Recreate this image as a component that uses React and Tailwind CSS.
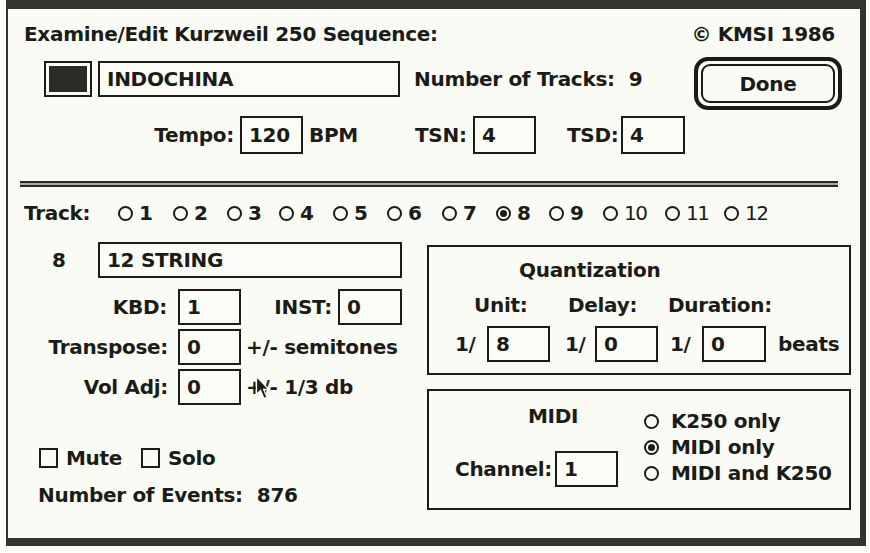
import React from "react";

// Kurzweil 250 sequence editor dialog, classic Mac look

function Field({ className = "", children }) {
  return (
    <div className={`flex shrink-0 items-center border-2 border-[#1c1c16] bg-[#fcfcf7] pl-[7px] ${className}`}>
      {children}
    </div>
  );
}

function Radio({ on = false }) {
  return (
    <span className="flex h-[15px] w-[15px] shrink-0 items-center justify-center rounded-full border-2 border-[#1c1c16]">
      {on && <span className="h-[7px] w-[7px] rounded-full bg-[#1c1c16]" />}
    </span>
  );
}

function Check({ label, className = "" }) {
  return (
    <div className={`flex items-center ${className}`}>
      <span className="h-[20px] w-[19px] shrink-0 border-2 border-[#1c1c16]" />
      <span className="ml-[8px]">{label}</span>
    </div>
  );
}

const TRACKS = [
  { n: "1", w: "w-[55px]" },
  { n: "2", w: "w-[54px]" },
  { n: "3", w: "w-[52px]" },
  { n: "4", w: "w-[54px]" },
  { n: "5", w: "w-[54px]" },
  { n: "6", w: "w-[55px]" },
  { n: "7", w: "w-[54px]" },
  { n: "8", w: "w-[53px]", on: true },
  { n: "9", w: "w-[54px]" },
  { n: "10", w: "w-[62px]", thin: true },
  { n: "11", w: "w-[59px]", thin: true },
  { n: "12", w: "w-[50px]", thin: true },
];

function Cursor() {
  return (
    <svg className="absolute left-[9px] top-[-1px]" width="17" height="25" viewBox="0 0 17 25">
      <path
        d="M1.5 1.5 L1.5 19.5 L5.5 15.5 L9 23.5 L12 22.2 L8.6 14.5 L14 14.5 Z"
        fill="#1c1c16"
        stroke="#fbfbf6"
        strokeWidth="1.3"
      />
    </svg>
  );
}

export default function App() {
  return (
    <div className="h-[553px] w-[870px] bg-[#fdfdfa] font-['DejaVu_Sans','Liberation_Sans',sans-serif] text-[20px] font-bold leading-[22px] tracking-[-0.3px] text-[#1c1c16]">
      <div className="ml-[6px] h-[546px] w-[860px] border-b-[8px] border-l-2 border-r-[6px] border-t-[9px] border-[#34342f] bg-[#fbfbf6]">
        {/* title line */}
        <div className="mt-[15px] flex h-[20px] items-center justify-between pl-[16px] pr-[25px]">
          <span>Examine/Edit Kurzweil 250 Sequence:</span>
          <span>© KMSI 1986</span>
        </div>

        {/* name row */}
        <div className="mt-[13px] flex h-[53px] items-start">
          <div className="ml-[36px] mt-[4px] h-[36px] w-[48px] shrink-0 border-2 border-[#1c1c16] p-[3px]">
            <div className="h-full w-full bg-[#2a2a26]" />
          </div>
          <Field className="ml-[6px] mt-[4px] h-[36px] w-[302px]">INDOCHINA</Field>
          <div className="ml-[14px] mt-[4px] flex h-[36px] items-center">
            <span>Number of Tracks:</span>
            <span className="ml-[14px]">9</span>
          </div>
          <div className="ml-auto mr-[18px] h-[53px] w-[148px] shrink-0 rounded-[14px] border-[4px] border-[#1c1c16] p-[3px]">
            <div className="flex h-full w-full items-center justify-center rounded-[9px] border-2 border-[#1c1c16]">
              Done
            </div>
          </div>
        </div>

        {/* tempo / time signature */}
        <div className="mt-[6px] flex h-[38px] items-center">
          <span className="w-[226px] text-right">Tempo:</span>
          <Field className="ml-[6px] h-[38px] w-[63px]">120</Field>
          <span className="w-[112px] pl-[6px]">BPM</span>
          <span className="w-[53px]">TSN:</span>
          <Field className="ml-[5px] h-[38px] w-[63px]">4</Field>
          <span className="ml-[31px] w-[49px] whitespace-nowrap text-right">TSD:</span>
          <Field className="ml-[5px] h-[38px] w-[64px]">4</Field>
        </div>

        <div className="ml-[12px] mt-[27px] h-[6px] w-[818px] border-y-2 border-[#2a2a25] bg-[#a9a9a2]" />

        {/* track selector */}
        <div className="mt-[17px] flex h-[18px] items-center">
          <span className="w-[110px] shrink-0 pl-[16px]">Track:</span>
          {TRACKS.map((t) => (
            <div key={t.n} className={`flex shrink-0 items-center ${t.w}`}>
              <Radio on={t.on} />
              <span className={t.thin ? "ml-[6px] font-normal tracking-[-1.5px]" : "ml-[6px]"}>{t.n}</span>
            </div>
          ))}
        </div>

        <div className="mt-[20px] flex">
          {/* track details */}
          <div className="w-[419px] shrink-0">
            <div className="flex h-[36px] items-center">
              <span className="w-[90px] pl-[44px]">8</span>
              <Field className="h-[36px] w-[304px]">12 STRING</Field>
            </div>
            <div className="mt-[11px] flex h-[36px] items-center">
              <span className="w-[159px] text-right">KBD:</span>
              <Field className="ml-[11px] h-[36px] w-[63px]">1</Field>
              <span className="w-[91px] text-right">INST:</span>
              <Field className="ml-[6px] h-[36px] w-[64px]">0</Field>
            </div>
            <div className="mt-[4px] flex h-[36px] items-center">
              <span className="w-[160px] text-right">Transpose:</span>
              <Field className="ml-[10px] h-[36px] w-[63px]">0</Field>
              <span className="ml-[5px] whitespace-nowrap">+/- semitones</span>
            </div>
            <div className="mt-[4px] flex h-[36px] items-center">
              <span className="w-[160px] text-right">Vol Adj:</span>
              <Field className="ml-[10px] h-[36px] w-[63px]">0</Field>
              <span className="relative ml-[5px] whitespace-nowrap">
                +/- 1/3 db
                <Cursor />
              </span>
            </div>
            <div className="mt-[43px] flex h-[20px] items-center pl-[31px]">
              <Check label="Mute" className="w-[102px]" />
              <Check label="Solo" />
            </div>
            <div className="mt-[17px] flex h-[20px] items-center pl-[30px]">
              <span>Number of Events:</span>
              <span className="ml-[14px]">876</span>
            </div>
          </div>

          {/* quantization + midi */}
          <div className="mt-[3px] w-[424px] shrink-0">
            <div className="h-[130px] border-2 border-[#1c1c16]">
              <div className="mt-[13px] flex h-[20px] items-center pl-[90px]">Quantization</div>
              <div className="mt-[15px] flex h-[20px] items-center pl-[45px]">
                <span className="w-[94px]">Unit:</span>
                <span className="w-[100px]">Delay:</span>
                <span>Duration:</span>
              </div>
              <div className="mt-[11px] flex h-[36px] items-center pl-[26px]">
                <span className="w-[32px]">1/</span>
                <Field className="h-[36px] w-[63px]">8</Field>
                <span className="ml-[15px] w-[30px]">1/</span>
                <Field className="h-[36px] w-[63px]">0</Field>
                <span className="ml-[12px] w-[32px]">1/</span>
                <Field className="h-[36px] w-[64px]">0</Field>
                <span className="ml-[12px]">beats</span>
              </div>
            </div>

            <div className="mt-[14px] flex h-[121px] border-2 border-[#1c1c16]">
              <div className="w-[215px] shrink-0">
                <div className="mt-[15px] flex h-[20px] items-center pl-[99px]">MIDI</div>
                <div className="mt-[25px] flex h-[36px] items-center pl-[26px]">
                  <span className="w-[100px]">Channel:</span>
                  <Field className="h-[36px] w-[63px]">1</Field>
                </div>
              </div>
              <div className="mt-[17px]">
                <div className="flex h-[26px] items-center">
                  <Radio />
                  <span className="ml-[12px]">K250 only</span>
                </div>
                <div className="flex h-[26px] items-center">
                  <Radio on />
                  <span className="ml-[12px]">MIDI only</span>
                </div>
                <div className="flex h-[26px] items-center">
                  <Radio />
                  <span className="ml-[12px]">MIDI and K250</span>
                </div>
              </div>
            </div>
          </div>
        </div>
      </div>
    </div>
  );
}
